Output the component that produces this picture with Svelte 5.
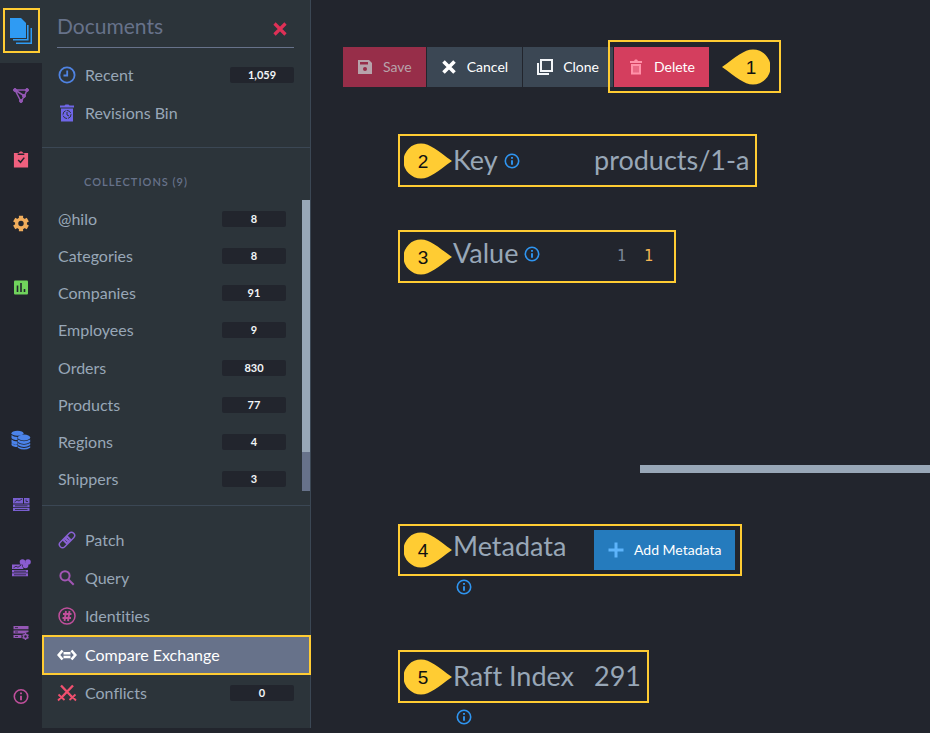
<script>
  const collections = [
    ['@hilo', '8'], ['Categories', '8'], ['Companies', '91'], ['Employees', '9'],
    ['Orders', '830'], ['Products', '77'], ['Regions', '4'], ['Shippers', '3']
  ];
  const railTop = [
    ['Documents', 'documents'], ['Indexes', 'indexes'], ['Tasks', 'tasks'],
    ['Settings', 'settings'], ['Stats', 'stats']
  ];
  const railBottom = [
    ['Databases', 'databases'], ['Server Dashboard', 'server'], ['Cluster Dashboard', 'cluster'],
    ['Manage Server', 'manage'], ['About', 'about']
  ];
  const tools = [
    ['Patch', 'patch'], ['Query', 'query'], ['Identities', 'identities'],
    ['Compare Exchange', 'compare'], ['Conflicts', 'conflicts', '0']
  ];
</script>

{#snippet icon(name)}
  {#if name === 'documents'}
    <svg class="big" viewBox="0 0 24 30" fill="#2f9bf3">
      <path d="M1 1h11l5 5v15H1z" />
      <path d="M18 8h1.600v15.600H4V22h14zM21.500 11H23v16H7v-1.500h14.500z" />
    </svg>
  {:else if name === 'indexes'}
    <svg viewBox="0 0 16 16" fill="#9457b5" stroke="#9457b5">
      <path d="M2 2.500h12L11.500 8.500 8 14zM2 2.500l9.500 6" fill="none" stroke-width="1.500" />
      <circle cx="2" cy="2.500" r="1.500" /><circle cx="14" cy="2.500" r="1.500" />
      <circle cx="11" cy="8.500" r="1.500" /><circle cx="8" cy="13.500" r="1.500" />
    </svg>
  {:else if name === 'tasks'}
    <svg viewBox="0 0 16 18">
      <path d="M.5 2h5L7 .5h2L10.500 2h5v15.500H.5z" fill="#f0607e" />
      <path d="M4.500 3.500h7M5 9.500l2.500 2.500 4-5" fill="none" stroke="#22252d" stroke-width="1.600" />
    </svg>
  {:else if name === 'settings'}
    <svg viewBox="0 0 16 16">
      <circle cx="8" cy="8" r="6" fill="#f0ad5c" />
      <path d="M8 .2v15.600M1.200 4.100l13.600 7.800M1.200 11.900l13.600-7.800" stroke="#f0ad5c" stroke-width="4.200" />
      <circle cx="8" cy="8" r="2.700" fill="#22252d" />
    </svg>
  {:else if name === 'stats'}
    <svg viewBox="0 0 16 16">
      <rect x="1" y="1" width="14" height="14" rx="1" fill="#70d35c" />
      <path d="M4.500 6v6.500M8 3.500v9M11.500 9.500v3" stroke="#22252d" stroke-width="1.600" />
    </svg>
  {:else if name === 'databases'}
    <svg class="mid" viewBox="0 0 20 20" fill="#4b83ea">
      <ellipse cx="6.500" cy="3.200" rx="6" ry="2.500" />
      <path d="M.5 5q2 2 6 2v3q-4.500 0-6-2zM.5 9.500q2 2 6 2v3q-4.500 0-6-2zM.5 13q2 2 6 2v2q-4.500 0-6-2z" />
      <ellipse cx="13" cy="7.500" rx="6.200" ry="3" />
      <path d="M6.800 9.500q6.200 3.500 12.400 0v2.500q-6.200 3.800-12.400 0zM6.800 13q6.200 3.500 12.400 0v2q-6.200 3.800-12.400 0zM6.800 16.200q6.200 3.500 12.400 0v1.500q-6.200 3.800-12.400 0z" />
    </svg>
  {:else if name === 'server'}
    <svg class="mid" viewBox="0 0 20 20">
      <path d="M2 4h10v5.500H2zM13 4h5.500v5.500H13zM2 10.500h16.500v2.700H2zM2 14h16.500v3H2z" fill="#795fd0" />
      <path d="M3.500 8l2.500-2 2 1 3-2M15 5.500v2h2M4 11.800h12.500M4 15.500h12.500" fill="none" stroke="#22252d" stroke-width=".8" />
    </svg>
  {:else if name === 'cluster'}
    <svg class="mid" viewBox="0 0 20 20">
      <g fill="#8a5cd0"><circle cx="11.500" cy="4" r="2.800" /><circle cx="17" cy="4" r="2.800" /><circle cx="14.500" cy="7.500" r="2.800" />
      <path d="M1 6.500h9.500l2 4.500H1zM1 12h16v2.500H1zM1 15.300h16v3H1z" /></g>
      <path d="M2.500 9.800L5 8.200l2 1 3-2M3 13.200h12M3 16.800h12" fill="none" stroke="#22252d" stroke-width=".8" />
    </svg>
  {:else if name === 'manage'}
    <svg viewBox="0 0 16 16">
      <path d="M.5 1.500h15v3.200H.5zM.5 6h15v1.500l-5 1.500h-10zM.5 10.500h8v3h-8z" fill="#9457b5" />
      <path d="M2 3.100h3M2 7.500h3M2 12h3" stroke="#22252d" stroke-width=".8" />
      <circle cx="12.500" cy="12" r="2" fill="none" stroke="#9457b5" stroke-width="1.500" />
      <path d="M12.500 8.500V10M12.500 14v1.500M9.500 10.300l1.300.7M14.200 13l1.300.7M9.500 13.700l1.300-.7M14.200 11l1.300-.7" stroke="#9457b5" stroke-width="1.500" />
    </svg>
  {:else if name === 'about' || name === 'info'}
    <svg viewBox="0 0 16 16" stroke={name === 'about' ? '#bf4f9b' : '#2f95f0'} fill="none">
      <circle cx="8" cy="8" r="6.700" stroke-width="1.600" />
      <path d="M8 7.200v4.600M8 4v1.700" stroke-width="1.900" />
    </svg>
  {:else if name === 'recent'}
    <svg viewBox="0 0 18 18" fill="none" stroke="#4f83e2" stroke-width="1.800">
      <circle cx="9" cy="9" r="7.600" /><path d="M9.200 4.500v5H5.500" />
    </svg>
  {:else if name === 'bin'}
    <svg viewBox="0 0 18 18">
      <path d="M2 1.500h4.500L7.500.5h3l1 1H16v2H2zM3 4.500h12v13H3z" fill="#6f66e8" />
      <circle cx="9" cy="10.500" r="4" fill="none" stroke="#2c343a" stroke-dasharray="5 1" /><path d="M9 8v3l2 1" fill="none" stroke="#2c343a" />
    </svg>
  {:else if name === 'patch'}
    <svg viewBox="0 0 20 20">
      <g transform="rotate(-45 10 10)">
        <rect x="-.5" y="6.500" width="21" height="7" rx="3.500" fill="none" stroke="#8a62d5" stroke-width="1.600" />
        <path d="M6 6.500h8v7H6z" fill="#8a62d5" /><path d="M8.500 8.200v4M11.500 8.200v4" stroke="#2c343a" stroke-dasharray="1.300 1" />
      </g>
    </svg>
  {:else if name === 'query'}
    <svg viewBox="0 0 18 18" fill="none" stroke="#a256b4" stroke-width="2">
      <circle cx="7" cy="6.800" r="4.600" /><path d="M10.200 10.200l5.500 5.500" />
    </svg>
  {:else if name === 'identities'}
    <svg viewBox="0 0 18 18" fill="none" stroke="#c04f9c" stroke-width="1.500">
      <circle cx="9" cy="9" r="8" /><path d="M8 4L6.500 14M11.500 4L10 14M5 7h8.500M4.500 11H13" stroke-width="1.900" />
    </svg>
  {:else if name === 'compare'}
    <svg viewBox="0 0 20 18" fill="none" stroke="#fff" stroke-width="2.600">
      <path d="M5.500 4.500L1.700 9l3.800 4.500M14.500 4.500L18.300 9l-3.800 4.500M6.500 7.300h7M6.500 11h7" />
    </svg>
  {:else if name === 'conflicts'}
    <svg viewBox="0 0 20 18" fill="none" stroke="#f0506f">
      <path d="M4 1.500l12 12.500M16 1.500L4 14" stroke-width="2.400" />
      <path d="M1.500 10.500l6 5.500M18.500 10.500l-6 5.500M1 16.500l3-3M19 16.500l-3-3" stroke-width="1.800" />
    </svg>
  {/if}
{/snippet}

{#snippet pin(n, left)}
  <svg class="pin" viewBox="0 0 48 36" aria-label={'Step ' + n}>
    {#if left}
      <path d="M0 18C14 8 22 .5 31 .5a17.500 17.500 0 0 1 0 35C22 35.500 14 28 0 18z" fill="#ffcc33" />
    {:else}
      <path d="M48 18C34 8 26 .5 17 .5a17.500 17.500 0 0 0 0 35C26 35.500 34 28 48 18z" fill="#ffcc33" />
    {/if}
    <text x={left ? 29 : 19} y="25" text-anchor="middle">{n}</text>
  </svg>
{/snippet}

<div class="app">
  <nav class="rail" aria-label="Main">
    {#each railTop as [label, name], i}
      <a href="#{name}" class:current={i === 0} aria-label={label}>{@render icon(name)}</a>
    {/each}
    <div class="split"></div>
    {#each railBottom as [label, name]}
      <a href="#{name}" aria-label={label}>{@render icon(name)}</a>
    {/each}
  </nav>

  <aside>
    <header>
      <h1>Documents</h1>
      <button class="close" aria-label="Close">
        <svg viewBox="0 0 14 14"><path d="M1.500 1.500l11 11M12.500 1.500l-11 11" stroke="#df3056" stroke-width="3.200" /></svg>
      </button>
    </header>
    <ul class="recent">
      <li><a href="#recent">{@render icon('recent')}<span>Recent</span><b>1,059</b></a></li>
      <li><a href="#bin">{@render icon('bin')}<span>Revisions Bin</span></a></li>
    </ul>
    <h2>Collections (9)</h2>
    <div class="scroller">
      <ul class="collections">
        {#each collections as [name, count]}
          <li><a href="#{name}"><span>{name}</span><b>{count}</b></a></li>
        {/each}
      </ul>
      <div class="track"><div class="thumb"></div></div>
    </div>
    <ul class="tools">
      {#each tools as [label, name, count]}
        <li>
          <a href="#{name}" class:active={name === 'compare'}>
            {@render icon(name)}<span>{label}</span>{#if count}<b>{count}</b>{/if}
          </a>
        </li>
      {/each}
    </ul>
  </aside>

  <main>
    <div class="toolbar">
      <button class="save" disabled>
        <svg viewBox="0 0 16 16"><path d="M1 1h11l3 3v11H1z" fill="#b7a3ab" /><path d="M3 3h8v2.500H3z" fill="#972e49" /><circle cx="8" cy="10" r="2" fill="#972e49" /></svg>
        Save
      </button>
      <button>
        <svg viewBox="0 0 16 16"><path d="M2.500 2.500l11 11M13.500 2.500l-11 11" stroke="#fff" stroke-width="3.600" /></svg>
        Cancel
      </button>
      <button class="clone">
        <svg viewBox="0 0 16 16" fill="none" stroke="#f2f5f8" stroke-width="2"><path d="M4 1h11v11H4zM1 4v11h11" /></svg>
        Clone
      </button>
      <div class="marked">
        <button class="delete">
          <svg viewBox="0 0 16 16"><path d="M2 2h4l1-1.500h2L10 2h4v2H2zM3 5h10v10.500H3z" fill="#ff91a8" /><path d="M6 7v6.500M8 7v6.500M10 7v6.500" stroke="#d43e5e" /></svg>
          Delete
        </button>
        {@render pin(1, true)}
      </div>
    </div>

    <section class="key">
      <div class="field">
        {@render pin(2)}
        <h3>Key {@render icon('info')}</h3>
        <span class="text">products/1-a</span>
      </div>
    </section>
    <section class="value">
      <div class="field">
        {@render pin(3)}
        <h3 class="raised">Value {@render icon('info')}</h3>
        <code><i>1</i><em>1</em></code>
      </div>
    </section>
    <div class="hbar"></div>
    <section class="metadata">
      <div class="field">
        {@render pin(4)}
        <h3 class="raised">Metadata</h3>
        <button class="add">
          <svg viewBox="0 0 16 16"><path d="M8 .5v15M.5 8h15" stroke="#5db4fb" stroke-width="3" /></svg>
          Add Metadata
        </button>
      </div>
      <div class="hint">{@render icon('info')}</div>
    </section>
    <section class="raft">
      <div class="field">
        {@render pin(5)}
        <h3>Raft Index</h3>
        <span class="text">291</span>
      </div>
      <div class="hint">{@render icon('info')}</div>
    </section>
  </main>
</div>

<style>
  :global(body) { margin: 0; background: #22252d; }
  .app {
    display: flex; min-height: 100vh; background: #22252d; color: #98a7b7;
    font: 16px/20px Lato, sans-serif; font-variant-ligatures: none;
  }
  ul { list-style: none; margin: 0; padding: 0; }
  a { color: inherit; text-decoration: none; }
  h1, h2, h3 { margin: 0; font-weight: 400; }
  svg { display: block; flex: none; }
  button { border: 0; padding: 0; background: none; font: inherit; color: inherit; }

  .rail { flex: 0 0 42px; display: flex; flex-direction: column; }
  .rail a { height: 64px; display: flex; align-items: center; justify-content: center; padding-right: 1px; position: relative; }
  .rail svg { width: 16px; height: 17px; }
  .rail svg.mid { width: 20px; height: 20px; }
  .rail svg.big { width: 24px; height: 30px; }
  .rail a.current { background: #2c343a; height: 63px; }
  .rail a.current::after {
    content: ''; position: absolute; inset: 8px 2px 10px 3px; border: 2px solid #ffcc33;
  }
  .split { height: 89px; }

  aside { flex: 0 0 268px; background: #2c343a; border-right: 1px solid #3b4754; align-self: flex-start; }
  header {
    display: flex; align-items: center; justify-content: space-between; height: 47px;
    margin: 0 16px 0 15px; border-bottom: 1px solid #67728a;
  }
  h1 { font-size: 21px; line-height: 28px; color: #67728a; padding-top: 5px; }
  .close { width: 14px; height: 14px; margin: 10px 7px 0 0; }
  aside a { display: flex; align-items: center; gap: 8px; height: 38px; padding: 0 16px 0 15px; }
  aside a svg { width: 20px; height: 18px; }
  aside a span { flex: 1; }
  aside b {
    width: 64px; height: 16px; border-radius: 2px; background: #22252d; color: #f2f5f8;
    font-size: 11px; line-height: 16px; text-align: center;
  }
  .recent { padding: 8px 0 15px; border-bottom: 1px solid #3b4754; }
  h2 {
    padding: 26px 0 10px 42px; font-size: 11px; font-weight: 600; line-height: 16px; color: #67728a;
    text-transform: uppercase; letter-spacing: 1px;
  }
  .scroller { display: flex; height: 291px; margin-bottom: 14px; overflow: hidden; }
  .collections { flex: 1; display: grid; height: 298px; grid-auto-rows: 1fr; }
  .collections a { height: 100%; padding-left: 16px; }
  .track { width: 8px; background: #67728a; }
  .thumb { height: 252px; background: #98a7b7; }
  .tools { border-top: 1px solid #3b4754; padding: 15px 0 16px; }
  .active { background: #67728a; color: #fff; position: relative; margin-top: 1px; }
  .active::after { content: ''; position: absolute; inset: -1px -1px -1px 0; border: 2px solid #ffcc33; }

  main { flex: 1; min-width: 0; padding-top: 47px; }
  .toolbar { display: flex; gap: 1px; margin-left: 32px; }
  .toolbar button, .add {
    height: 40px; display: flex; align-items: center; gap: 10px; padding: 0 14px;
    background: #3b4754; color: #fff; font-size: 14px; white-space: nowrap;
  }
  .toolbar svg { width: 16px; height: 16px; }
  .toolbar .save { background: #972e49; color: #b7a3ab; }
  .toolbar .delete { background: #d43e5e; }
  .marked { position: relative; display: flex; align-items: center; gap: 13px; padding-right: 11px; }
  .marked::after { content: ''; position: absolute; inset: -7px 0 -6px -6px; border: 2px solid #ffcc33; }
  .pin, .toolbar .pin { width: 48px; height: 36px; }
  .pin text { font: 19px 'Liberation Sans', Arial, sans-serif; fill: #111; }

  section { margin-left: 87px; }
  .field {
    box-sizing: border-box; width: fit-content; height: 53px; border: 2px solid #ffcc33;
    display: grid; grid-template-columns: 49px 141px auto; align-items: center; padding: 0 6px 0 4px;
  }
  .key { padding-top: 47px; }
  .value { padding-top: 43px; }
  .raft { padding-top: 55px; }
  h3, .text { font-size: 27px; line-height: 36px; white-space: nowrap; padding-bottom: 2px; }
  h3 { display: flex; align-items: center; gap: 6px; }
  h3 svg, .hint svg { width: 16px; height: 16px; }
  h3 svg { margin-top: 2px; }
  .raised { padding-bottom: 8px; }
  code { font: 15px/20px 'DejaVu Sans Mono', monospace; padding: 0 15px 2px 23px; display: flex; gap: 18px; }
  code i { font-style: normal; color: #7c8698; }
  code em { font-style: normal; color: #f5b553; }
  .hbar { height: 8px; margin: 182px 0 51px 329px; background: #98a7b7; }
  .add { background: #257bbd; }
  .metadata .field { height: 52px; padding-right: 5px; }
  .add svg { width: 16px; height: 16px; }
  .hint { height: 16px; padding: 3px 0 0 58px; }
  .raft .hint { padding-top: 6px; }
</style>
